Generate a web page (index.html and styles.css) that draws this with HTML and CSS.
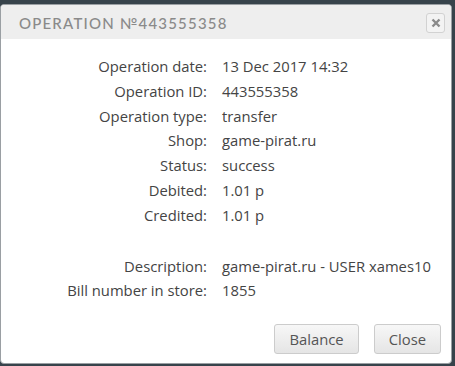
FILE: index.html
```html
<!DOCTYPE html>
<html>
<head>
<meta charset="utf-8">
<link rel="stylesheet" href="styles.css">
</head>
<body>
<div class="dialog">
  <div class="header">
    <div class="title">Operation №443555358</div>
    <button class="x-btn" aria-label="close">
      <svg width="10" height="10" viewBox="0 0 10 10"><path d="M1.5 1.5 L8.5 8.5 M8.5 1.5 L1.5 8.5" stroke="#8a8a8a" stroke-width="2.4" stroke-linecap="butt"/></svg>
    </button>
  </div>
  <div class="body">
    <div class="rows">
      <div class="label">Operation date:</div><div class="value">13 Dec 2017 14:32</div>
      <div class="label">Operation ID:</div><div class="value">443555358</div>
      <div class="label">Operation type:</div><div class="value">transfer</div>
      <div class="label">Shop:</div><div class="value">game-pirat.ru</div>
      <div class="label">Status:</div><div class="value">success</div>
      <div class="label">Debited:</div><div class="value">1.01 р</div>
      <div class="label">Credited:</div><div class="value">1.01 р</div>
      <div class="label spacer"></div><div class="value spacer"></div>
      <div class="label">Description:</div><div class="value">game-pirat.ru - USER xames10</div>
      <div class="label">Bill number in store:</div><div class="value">1855</div>
    </div>
    <div class="footer">
      <button class="btn">Balance</button>
      <button class="btn">Close</button>
    </div>
  </div>
</div>
</body>
</html>
```
FILE: styles.css
```css
html, body {
  margin: 0;
  padding: 0;
  background: #37434b;
  width: 455px;
  height: 366px;
  overflow: hidden;
}
.dialog {
  margin-top: 4px;
  width: 450px;
  height: 358px;
  background: #fff;
  border: 1px solid #9a9fa3;
  border-radius: 4px;
  display: flex;
  flex-direction: column;
  overflow: hidden;
  font-family: "Open Sans", Lato, sans-serif;
}
.header {
  height: 34px;
  background: #eeeeee;
  display: flex;
  align-items: center;
  justify-content: space-between;
  padding: 0 6px 0 18px;
}
.title {
  font-family: Lato, sans-serif;
  text-transform: uppercase;
  font-size: 15px;
  letter-spacing: 1.2px;
  color: #8a8a8a;
  font-weight: 500;
  padding-top: 1px;
}
.x-btn {
  width: 19px;
  height: 20px;
  border: 1px solid #d2d2d2;
  border-radius: 3px;
  background: #f3f3f3;
  padding: 0;
  display: flex;
  align-items: center;
  justify-content: center;
  margin-top: 1px;
}
.body {
  flex: 1;
  display: flex;
  flex-direction: column;
}
.rows {
  display: grid;
  grid-template-columns: 206px 1fr;
  column-gap: 15px;
  row-gap: 0;
  padding-top: 15px;
  font-size: 14.8px;
  color: #444;
  line-height: 24.8px;
}
.label {
  text-align: right;
}
.spacer {
  height: 26px;
}
.footer {
  margin-top: auto;
  display: flex;
  justify-content: flex-end;
  gap: 15px;
  padding: 0 10px 9px 0;
}
.btn {
  font-family: "Open Sans", Lato, sans-serif;
  font-size: 14.8px;
  color: #555;
  height: 30px;
  padding: 0 14px;
  border: 1px solid #cccccc;
  border-radius: 3px;
  background: linear-gradient(#f7f7f7, #e5e5e5);
}
```
